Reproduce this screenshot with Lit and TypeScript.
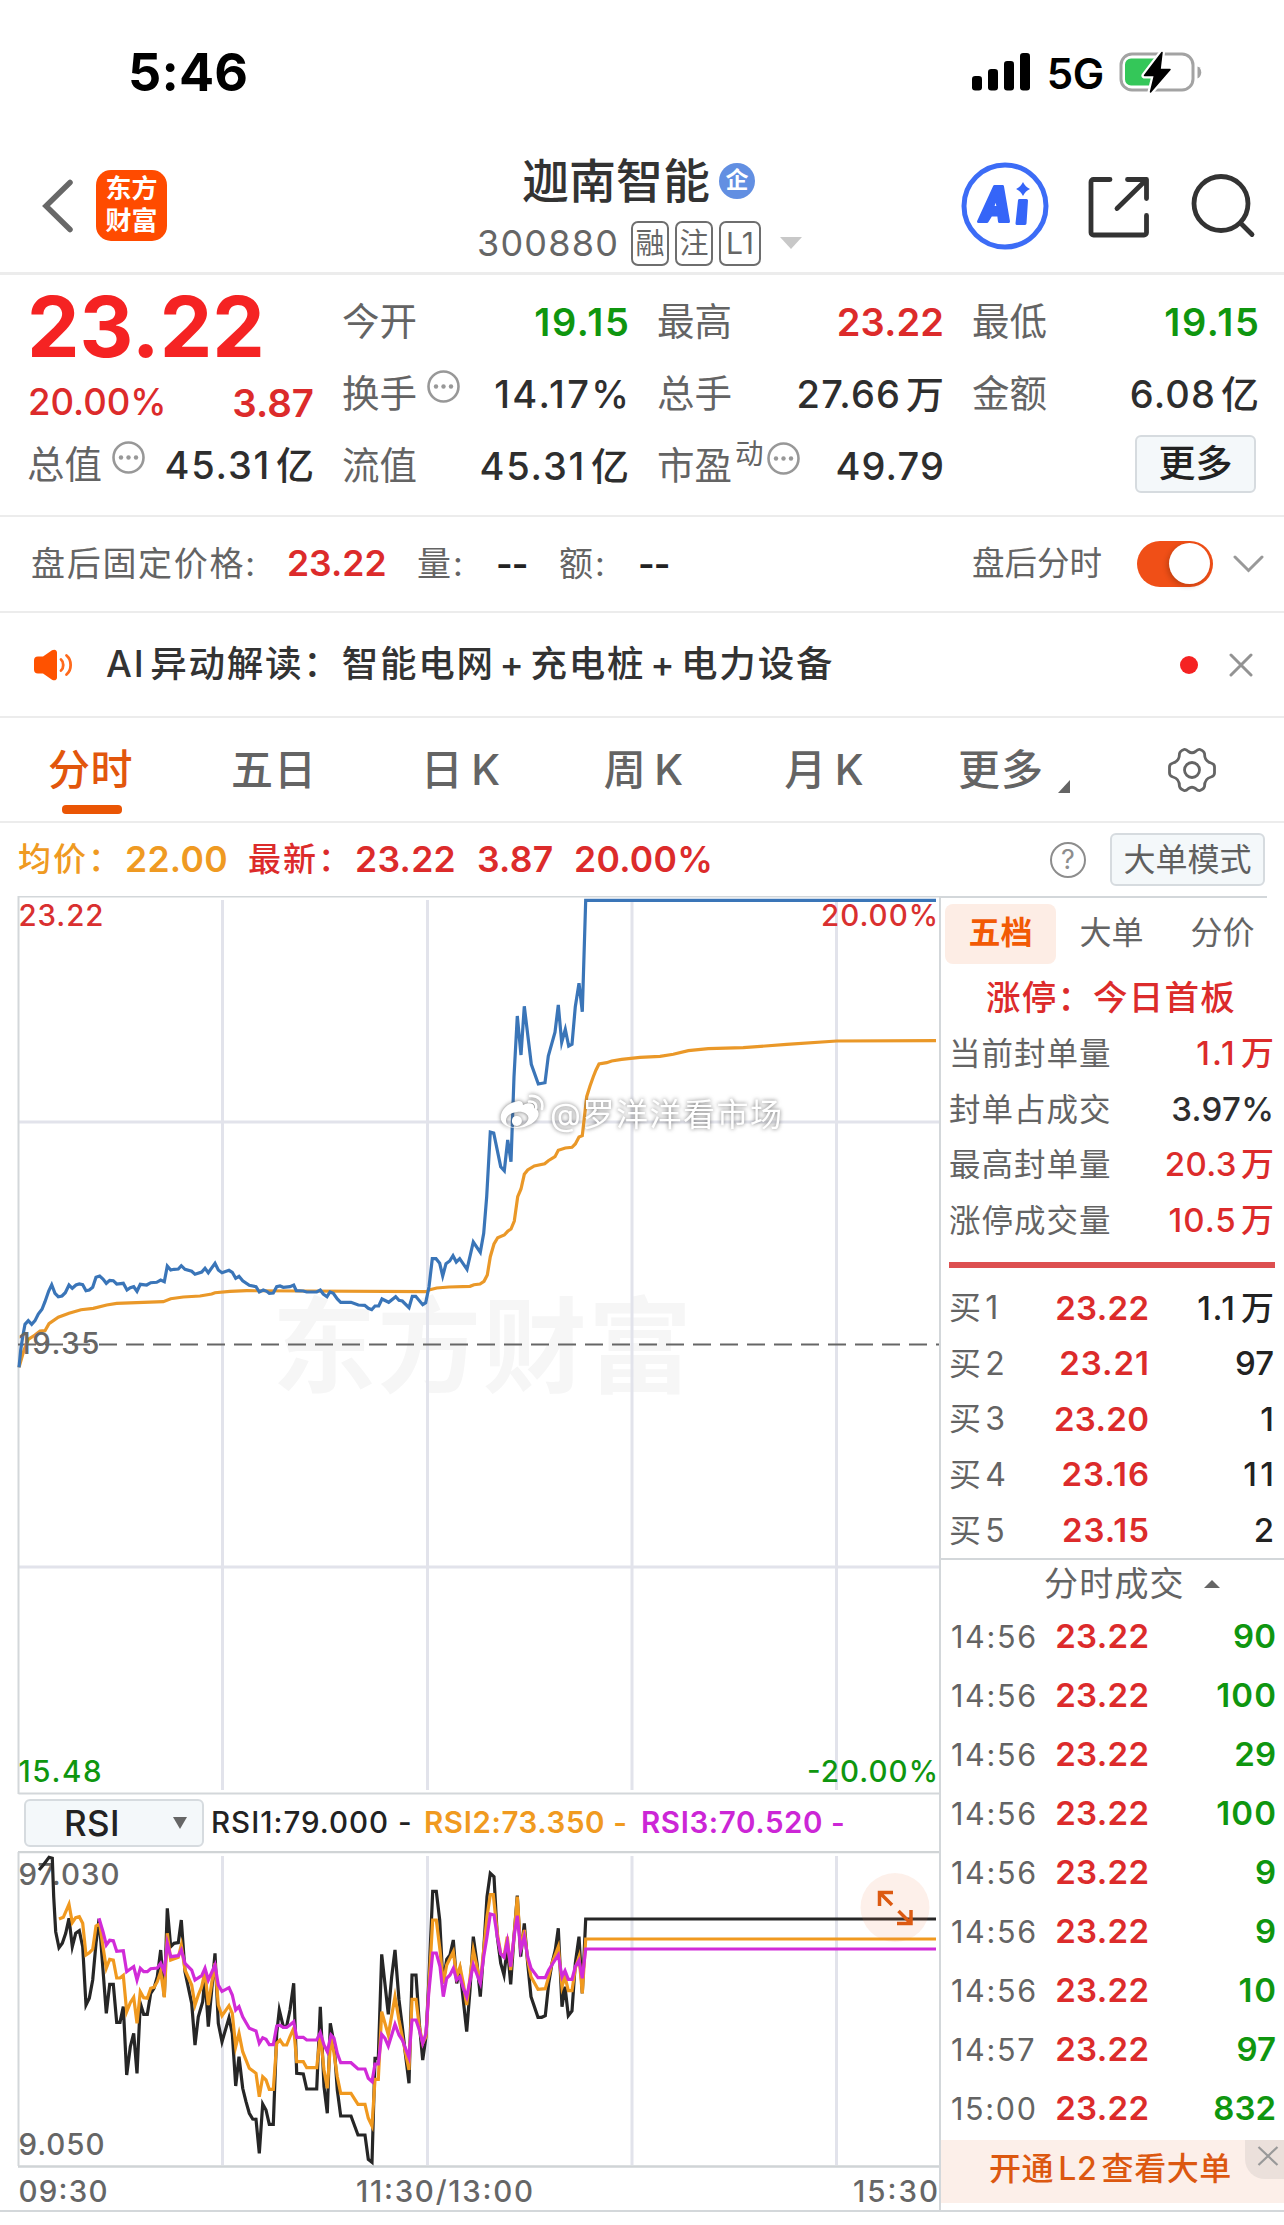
import { LitElement, html, svg, css } from "lit";
import { customElement } from "lit/decorators.js";
import { styleMap } from "lit/directives/style-map.js";

type Pt = [number, number];

/** Turns a flat "x,y;x,y" series at three units per pixel into points shifted by an offset. */
function series(raw: string, dx: number, dy: number): Pt[] {
  return raw.split(";").map((p) => {
    const [x, y] = p.split(",").map(Number);
    return [x / 3 + dx, y / 3 + dy] as Pt;
  });
}
const poly = (pts: Pt[]) => pts.map((p) => p[0].toFixed(1) + "," + p[1].toFixed(1)).join(" ");

/** Splits mixed text into Latin and Han runs, with a small gap between neighbouring runs. */
const mixed = (text: string) =>
  (text.match(/[\x21-\x7e]+|[^\x21-\x7e]+/g) ?? []).map((run, i) => (i ? html`<span class="run">${run}</span>` : html`<span>${run}</span>`));

/** Opens up the tracking of numbers that contain the narrow digit 1. */
const tracking = (text: string, extra = 0) => {
  const ones = (text.match(/1/g) ?? []).length;
  const em = (ones * 0.1) / text.length + extra;
  return styleMap({ letterSpacing: em.toFixed(3) + "em", marginRight: (-em).toFixed(3) + "em" });
};

const PRICE: Pt[] = [
  ...series("57,412;62,360;68,320;75,283;85,272;95,283;105,272;115,252;126,238;135,215;146,183;155,164;165,190;175,200;186,198;196,188;207,165;217,175;228,165;238,162;248,164;258,182;268,180;278,172;288,142;299,138;309,147;319,160;329,151;340,152;350,162;370,160;381,180;391,173;401,170;411,184;421,163;440,165;452,158;470,157;482,150;493,155;502,108;512,120;522,118;535,117;544,107;555,118;575,124;585,133;605,126;615,115;625,128;645,100;655,120;666,128;687,121;697,127;707,145;717,139;728,152;748,166;768,170;778,186;790,180;800,184;808,190;820,189;830,170;840,168;850,172;870,170;881,165;889,182;910,183;920,186;950,186;961,180;970,192;981,200;990,186;1000,190;1012,207;1022,217;1053,217;1075,225;1094,226;1105,235;1115,239;1125,228;1136,228;1146,207;1166,217;1187,200;1197,211;1207,213;1227,233;1237,199;1247,199;1268,224", 0, 1230),
  ...series("137,1238;147,1190;157,1106;168,1106;179,1120;188,1158;198,1121;209,1113;219,1097;229,1116;239,1106;261,1138;280,1056;301,1087;311,1030;320,920;331,726;341,729;362,830;373,842;383,750;393,815;402,560;412,378;423,495;433,349;454,523;475,582;495,578;505,498;525,427;535,345;545,457;556,418;566,468;576,463;586,350;597,280;607,365;617,31;1668,31", 380, 890),
];
const AVERAGE: Pt[] = [
  ...series("57,412;72,360;85,328;105,315;120,303;135,302;147,281;175,262;207,250;243,239;280,235;320,225;350,220;410,218;490,215;512,206;550,201;600,198;635,192;645,188;690,184;740,182;900,183;1280,185", 0, 1230),
  ...series("147,1200;170,1194;207,1191;270,1189;282,1184;300,1182;312,1174;322,1155;331,1100;342,1062;353,1043;373,1035;383,1024;393,1017;403,993;413,920;423,897;433,853;443,840;463,828;494,821;505,812;525,800;535,781;556,774;576,772;586,762;597,741;607,737;620,620;630,588;640,560;648,540;657,522;680,518;695,513;725,508;780,502;840,499;880,493;925,482;985,476;1090,473;1220,463;1370,453;1668,452", 380, 890),
];
const RSI1: Pt[] = [
  ...series("117,360;130,345;147,322;157,325;161,440;167,545;177,593;187,580;197,550;207,505;217,590;227,550;238,542;248,590;258,765;268,745;278,690;288,580;295,525;300,540;309,660;319,790;329,703;340,703;350,817;360,817;370,770;380,975;391,890;401,850;411,970;421,760;431,793;442,793;452,730;462,715;472,680;482,600;493,740;502,475;512,590;522,580;535,578;544,510;555,665;575,760;585,885;595,800;608,755;615,680;625,830;635,720;645,610;655,820;666,875;687,803;697,850;707,1008;717,920;728,1015;738,1055;748,1090;758,1107;768,1108;778,1210;788,1062;798,1080;808,1123;820,1123;830,850;838,780;850,830;860,828;870,780;881,700;890,970;910,972;920,1017;950,1017;961,770", 0, 1750),
  ...series("12,1010;22,1090;31,820;42,880;52,1020;62,1098;93,1098;114,1155;135,1155;145,1228;156,1237;165,925;175,925;185,613;205,793;215,680;225,600;237,750;247,830;256,910;267,1000;276,675;288,675;298,820;308,930;318,860;326,700;338,424;349,424;359,510;369,700;380,628;390,615;400,570;410,700;420,660;430,750;440,845;450,720;460,560;471,640;481,740;491,600;501,440;511,370;522,380;532,560;542,640;552,675;562,590;572,703;582,560;592,437;602,620;613,520;623,640;633,740;654,802;665,802;676,797;686,700;696,640;706,600;715,535;726,770;735,710;745,797;756,783;766,640;777,560;787,730;797,507;1848,507", 320, 1750),
];
const RSI2: Pt[] = [
  ...series("177,507;190,502;207,463;217,518;227,503;238,500;248,520;258,615;268,608;278,598;288,528;299,522;309,590;319,655;329,628;340,630;350,684;360,684;370,676;380,785;391,758;401,742;411,820;421,725;431,743;442,745;452,715;462,712;472,695;482,665;493,742;502,550;512,630;535,622;544,585;555,660;575,705;585,765;595,735;605,710;615,665;625,765;635,700;645,640;655,765;666,797;687,767;697,790;707,890;717,850;728,905;748,955;768,970;778,1040;788,980;798,990;808,1018;820,1018;830,880;840,870;850,885;860,885;870,860;881,835;890,935;910,935;920,953;950,953;961,855", 0, 1750),
  ...series("12,960;22,1015;33,860;42,910;52,980;62,1030;93,1030;114,1063;135,1063;145,1105;156,1128;165,988;175,988;185,785;205,855;225,740;237,810;247,860;267,960;276,748;288,748;298,830;308,880;318,860;326,720;338,510;349,510;360,600;370,700;380,645;400,605;410,680;420,650;430,700;440,765;460,600;471,650;481,700;491,600;501,500;511,434;520,434;532,550;542,610;552,620;562,560;572,660;582,560;592,440;602,600;613,540;623,630;633,680;654,718;676,716;686,680;696,640;715,590;726,710;735,680;745,722;756,722;766,655;777,620;787,730;797,567;1848,567", 320, 1750),
];
const RSI3: Pt[] = [
  ...series("297,505;309,545;319,585;329,571;340,572;350,604;370,602;380,665;391,657;401,650;411,690;421,655;431,665;442,665;452,656;472,654;482,640;493,665;502,580;512,620;535,617;544,600;555,640;575,660;585,690;605,677;615,655;625,690;645,645;655,705;666,724;687,713;697,735;707,780;717,770;728,800;748,835;768,843;778,880;788,863;798,868;808,884;820,884;830,828;840,826;850,832;860,832;870,825;881,815;890,862;910,862;920,870;950,870;961,848", 0, 1750),
  ...series("12,885;22,905;33,855;42,865;52,910;62,938;93,938;114,957;135,957;145,985;156,995;165,942;175,942;185,853;195,865;205,888;225,823;237,855;247,870;267,922;276,810;288,810;298,840;308,880;318,850;326,730;338,609;349,609;360,650;370,740;380,685;390,675;400,655;410,690;420,680;430,715;440,740;460,645;481,700;491,620;501,560;511,492;522,495;532,560;542,612;552,622;562,575;572,650;582,560;592,497;602,600;613,560;623,620;633,655;654,683;676,683;686,660;715,615;726,680;735,662;745,688;756,688;766,650;777,632;787,685;797,597;1848,597", 320, 1750),
];
const GRID_X = [222.5, 427.5, 632, 836.5];

const base = css`
  :host, * { box-sizing: border-box; }
  :host {
    font-family: Inter, "Noto Sans CJK SC", sans-serif;
    color: #333;
    white-space: nowrap;
  }
  svg { display: block; flex: none; }
  .run { margin-left: 0.13em; }
  .red { color: #dc2b2b; }
  .green { color: #0f960f; }
  .dark { color: #2e2e2e; }
`;

@customElement("status-bar")
export class StatusBar extends LitElement {
  static styles = [base, css`
    :host { display: flex; height: 144px; padding: 0 82px 0 128px; align-items: center; color: #000; line-height: 1; }
    .time { font-size: 52px; font-weight: 700; letter-spacing: 0.2px; flex: 1; padding-top: 1px; }
    .net { font-size: 42px; font-weight: 600; margin: 3px 15px 0 16px; letter-spacing: -0.3px; }
  `];
  render() {
    return html`
      <span class="time">5:46</span>
      <svg width="59" height="38" viewBox="0 0 59 38"><rect y="23" width="10" height="14.5" rx="3.2"/><rect x="16" y="16" width="10" height="21.5" rx="3.2"/><rect x="32" y="8" width="10" height="29.5" rx="3.2"/><rect x="48" y="0" width="10" height="37.5" rx="3.2"/></svg>
      <span class="net">5G</span>
      <svg width="83" height="42" viewBox="0 0 83 42">
        <rect x="2" y="3" width="72" height="36" rx="11" fill="none" stroke="#a3a3a3" stroke-width="3"/>
        <path d="M12 7.5H35V34.500H12a6 6 0 0 1-6-6V13.500a6 6 0 0 1 6-6z" fill="#34c759"/>
        <path d="M78.500 15.500c5 1.500 5 10 0 12z" fill="#a3a3a3"/>
        <path d="M43 1.500 25.500 24.500H35.500L31.500 41 51 18.500H41z" fill="#000" stroke="#fff" stroke-width="6" stroke-linejoin="round"/>
        <path d="M43 1.500 25.500 24.500H35.500L31.500 41 51 18.500H41z" fill="#000" stroke="#000" stroke-width="1.500" stroke-linejoin="round"/>
      </svg>`;
  }
}

@customElement("stock-header")
export class StockHeader extends LitElement {
  static styles = [base, css`
    :host { display: grid; grid-template-columns: 477px 1fr 322px; height: 131px; border-bottom: 3px solid #ececec; }
    .left { display: flex; align-items: center; padding: 0 0 5px 42px; gap: 23px; }
    .logo { width: 71px; height: 71px; border-radius: 15px; background: #ff4b00; color: #fff; font-size: 26px; font-weight: 700; line-height: 32px; text-align: center; padding-top: 3px; }
    .logo span { display: block; height: 32px; }
    .mid { display: flex; flex-direction: column; }
    .title { display: flex; align-items: center; margin: 13px 0 0 45px; font-size: 47px; line-height: 48px; font-weight: 500; gap: 9px; }
    .badge { width: 36px; height: 36px; border-radius: 50%; background: #628fe2; color: #fff; font-size: 23px; line-height: 34px; font-weight: 700; text-align: center; }
    .sub { display: flex; align-items: center; gap: 6px; height: 46px; margin-top: 15px; color: #666; }
    .code { font-size: 36px; letter-spacing: 1.200px; margin-right: 6px; line-height: 46px; }
    .tag { border: 2px solid #6e6e6e; border-radius: 7px; width: 38px; height: 45px; font-size: 29px; line-height: 41px; text-align: center; }
    .tag.wide { width: 42px; font-size: 30px; letter-spacing: 0.3px; }
    .tri { margin-left: 13px; }
    .right { display: flex; align-items: center; padding-bottom: 5px; margin-left: -1px; }
  `];
  render() {
    return html`
      <div class="left">
        <svg width="31" height="54" viewBox="0 0 31 54"><path d="M28 3.500 4 27l24 23.500" fill="none" stroke="#686868" stroke-width="5.500" stroke-linecap="round" stroke-linejoin="miter"/></svg>
        <div class="logo"><span>东方</span><span>财富</span></div>
      </div>
      <div class="mid">
        <div class="title">迦南智能<span class="badge">企</span></div>
        <div class="sub"><span class="code">300880</span><span class="tag">融</span><span class="tag">注</span><span class="tag wide">L1</span>
          <svg class="tri" width="22" height="12" viewBox="0 0 22 12"><path d="M0 0H22L11 12z" fill="#c8c8c8"/></svg></div>
      </div>
      <div class="right">
        <svg width="88" height="88" viewBox="0 0 88 88">
          <circle cx="44" cy="44" r="41" fill="#fff" stroke="#3c6cf6" stroke-width="5"/>
          <path d="M33.500 24.500H41.500L47.500 59.500H38.500L37.700 53H30L26 59.500H17.500zM35 35 31.500 45.500H37.200z" fill="#3565f8" fill-rule="evenodd" stroke="#3565f8" stroke-width="3" stroke-linejoin="round"/>
          <path d="M58.500 38.500H65.500L64 61.500H56z" fill="#3565f8" stroke="#3565f8" stroke-width="3" stroke-linejoin="round"/>
          <path d="M62 20Q64.300 25 69 27Q64.300 29 62 34Q59.700 29 55 27Q59.700 25 62 20z" fill="#3565f8"/>
        </svg>
        <svg width="190" height="66" viewBox="1049 172 190 66" style="overflow:visible"><g fill="none" stroke="#333" stroke-width="4.800" stroke-linecap="round" stroke-linejoin="round"><path d="M1110 178.500H1093.500a2.500 2.500 0 0 0-2.500 2.500V231.500a2.500 2.500 0 0 0 2.500 2.500H1144a2.500 2.500 0 0 0 2.500-2.500V214.500M1127.500 178.500H1146.500V197.500M1146 179 1117 207.500"/><circle cx="1221" cy="202.500" r="27"/><path d="M1240.500 222 1252 233.500"/></g></svg>
      </div>`;
  }
}

@customElement("more-dot")
export class MoreDot extends LitElement {
  static styles = css`:host { display: block; flex: none; } svg { display: block; }`;
  render() {
    return html`<svg width="33" height="33" viewBox="0 0 33 33"><circle cx="16.500" cy="16.500" r="15" fill="none" stroke="#989898" stroke-width="2.600"/><g fill="#989898"><circle cx="9" cy="16.500" r="2.200"/><circle cx="16.500" cy="16.500" r="2.200"/><circle cx="24" cy="16.500" r="2.200"/></g></svg>`;
  }
}

interface Stat { label: string; value: string; tone?: string; dot?: boolean; sup?: string; }

@customElement("quote-panel")
export class QuotePanel extends LitElement {
  static styles = [base, css`
    :host { display: grid; grid-template-columns: repeat(4, 287px); column-gap: 28px; height: 242px; padding: 11px 0 0 27px; border-bottom: 2px solid #ececec; line-height: 1; }
    .row { display: flex; align-items: center; height: 72px; }
    .label { font-size: 37.500px; color: #646464; }
    .value { margin-left: auto; font-size: 38px; font-weight: 500; }
    .value.red, .value.green { font-weight: 600; }
    more-dot { margin: 0 0 16px 10px; }
    .sup { font-size: 28.500px; color: #646464; margin: 0 3px 24px 3px; align-self: center; }
    .sup + more-dot { margin-left: 0; }
    .big { height: 81px; display: flex; align-items: center; font-size: 83.500px; font-weight: 700; color: #f52323; }
    .change { height: 71px; display: flex; align-items: center; justify-content: space-between; padding-left: 1px; }
    .pct { font-size: 36.500px; font-weight: 500; color: #dc2b2b; }
    .diff { font-size: 38.500px; font-weight: 600; padding-top: 2px; color: #dc2b2b; }
    .row.first { height: 58px; margin-top: -2px; }
    .btn { margin: 0 3px 4px auto; width: 121px; height: 58px; border: 2px solid #d6dbdf; border-radius: 6px; background: #f4f8fa; font-size: 37px; font-weight: 500; line-height: 53px; text-align: center; color: #222; }
  `];
  private cell(s: Stat, cls = "") {
    const extra = s.tone ? 0.005 : 0.03;
    return html`<div class="row ${cls}"><span class="label">${s.label}</span>${s.sup ? html`<span class="sup">${s.sup}</span>` : ""}${s.dot ? html`<more-dot></more-dot>` : ""}<span class="value ${s.tone ?? "dark"}" style=${tracking(s.value, extra)}>${mixed(s.value)}</span></div>`;
  }
  render() {
    return html`
      <div>
        <div class="big">23.22</div>
        <div class="change"><span class="pct">20.00%</span><span class="diff">3.87</span></div>
        ${this.cell({ label: "总值", value: "45.31亿", dot: true }, "first")}
      </div>
      <div>
        ${this.cell({ label: "今开", value: "19.15", tone: "green" })}
        ${this.cell({ label: "换手", value: "14.17%", dot: true })}
        ${this.cell({ label: "流值", value: "45.31亿" })}
      </div>
      <div>
        ${this.cell({ label: "最高", value: "23.22", tone: "red" })}
        ${this.cell({ label: "总手", value: "27.66万" })}
        ${this.cell({ label: "市盈", value: "49.79", sup: "动", dot: true })}
      </div>
      <div>
        ${this.cell({ label: "最低", value: "19.15", tone: "green" })}
        ${this.cell({ label: "金额", value: "6.08亿" })}
        <div class="row"><span class="btn">更多</span></div>
      </div>`;
  }
}

@customElement("after-hours")
export class AfterHours extends LitElement {
  static styles = [base, css`
    :host { display: flex; align-items: center; height: 96px; padding: 0 20px 0 31px; border-bottom: 2px solid #ececec; color: #646464; font-size: 34px; line-height: 1; }
    .name { width: 256px; letter-spacing: 1.700px; }
    .num { width: 130px; font-size: 35.500px; font-weight: 600; }
    .k { width: 79px; letter-spacing: 2px; }
    .v { width: 63px; color: #222; font-weight: 600; font-size: 36px; letter-spacing: -1px; }
    .sw-label { margin-left: auto; font-size: 32.500px; }
    .switch { width: 76px; height: 46px; border-radius: 23px; background: #f04f17; margin: 0 20px 0 35px; padding: 2px 3px; display: flex; justify-content: flex-end; }
    .knob { width: 41px; height: 41px; border-radius: 50%; background: #fff; box-shadow: -2px 2px 5px rgba(90, 30, 0, 0.3); }
  `];
  render() {
    return html`
      <span class="name">盘后固定价格:</span><span class="num red">23.22</span>
      <span class="k">量:</span><span class="v">--</span><span class="k">额:</span><span class="v">--</span>
      <span class="sw-label">盘后分时</span><span class="switch"><span class="knob"></span></span>
      <svg width="31" height="18" viewBox="0 0 31 18"><path d="M2 2 15.500 15.500 29 2" fill="none" stroke="#999" stroke-width="3" stroke-linecap="round"/></svg>`;
  }
}

@customElement("ai-notice")
export class AiNotice extends LitElement {
  static styles = [base, css`
    :host { display: flex; align-items: center; height: 105px; padding: 0 31px 0 33px; border-bottom: 2px solid #ececec; font-size: 36.500px; line-height: 1; }
    .txt { font-weight: 500; margin: 0 auto 0 33px; letter-spacing: 1.800px; }
    .txt .run { margin-left: 0.13em; }
    .dot { width: 18px; height: 18px; border-radius: 50%; background: #f52222; margin-right: 31px; }
  `];
  render() {
    return html`
      <svg width="40" height="34" viewBox="0 0 40 34"><path d="M1 12.500a4 4 0 0 1 4-4H10L19 2.300C21.500.8 24 2 24 4.500V29.500C24 32 21.500 33.200 19 31.700L10 25.500H5a4 4 0 0 1-4-4z" fill="#ff5200"/><g fill="none" stroke="#ff6a1c" stroke-width="2.800" stroke-linecap="round"><path d="M28 11.500c3 2.500 3 8.500 0 11M33.500 7.500c5.500 4.500 5.500 14.500 0 19"/></g></svg>
      <span class="txt">${mixed("AI异动解读：智能电网+充电桩+电力设备")}</span>
      <span class="dot"></span>
      <svg width="24" height="24" viewBox="0 0 24 24"><path d="M2 2 22 22M22 2 2 22" stroke="#939393" stroke-width="3" stroke-linecap="round"/></svg>`;
  }
}

@customElement("period-tabs")
export class PeriodTabs extends LitElement {
  static styles = [base, css`
    :host { display: grid; grid-template-columns: 183px 182px 192px 174px 187px 192px 1fr; height: 105px; border-bottom: 2px solid #ececec; font-size: 42px; line-height: 104px; font-weight: 500; color: #646464; }
    .tab { display: flex; justify-content: center; letter-spacing: 1px; }
    .tab .run { margin-left: 0.18em; }
    .active { flex-direction: column; justify-content: flex-start; align-items: center; color: #e2560c; }
    .active span { letter-spacing: 0.5px; margin-left: -2px; }
    .active i { width: 60px; height: 9px; border-radius: 4px; background: #ea5504; margin-top: -17px; }
    .tri { align-self: flex-end; margin: 0 0 29px 14px; }
    .gear { align-self: center; margin-left: 57px; }
  `];
  render() {
    return html`
      <div class="tab active"><span>分时</span><i></i></div>
      <div class="tab">五日</div><div class="tab">${mixed("日K")}</div><div class="tab">${mixed("周K")}</div><div class="tab">${mixed("月K")}</div>
      <div class="tab">更多<svg class="tri" width="12" height="13" viewBox="0 0 12 13"><path d="M12 0V13H0z" fill="#646464"/></svg></div>
      <svg class="gear" width="50" height="50" viewBox="0 0 50 50"><g fill="none" stroke="#646464" stroke-width="2.800" stroke-linejoin="round"><path d="M17 4.500C18.500 4 20 5 21.500 6.500Q25 9 28.500 6.500C30 5 31.500 4 33 4.500Q37 6 37.500 8.500C37.500 14 40 17 44 18Q47.500 19 47.500 22V28Q47.500 31 44 32C40 33 37.500 36 37.500 41.500Q37 44 33 45.500C31.500 46 30 45 28.500 43.500Q25 41 21.500 43.500C20 45 18.500 46 17 45.500Q13 44 12.500 41.500C12.500 36 10 33 6 32Q2.500 31 2.500 28V22Q2.500 19 6 18C10 17 12.500 14 12.500 8.500Q13 6 17 4.500z"/><circle cx="25" cy="25" r="7.500"/></g></svg>`;
  }
}

@customElement("price-legend")
export class PriceLegend extends LitElement {
  static styles = [base, css`
    :host { display: flex; align-items: center; height: 73px; padding: 0 19px 0 18px; font-size: 35.500px; font-weight: 600; line-height: 1; }
    span { letter-spacing: 0.3px; }
    .k { font-size: 33px; font-weight: 500; letter-spacing: 2px; }
    .avg { color: #ef9a22; }
    .k.avg { width: 107px; } .n.avg { width: 123px; }
    .k.red { width: 107px; } .a { width: 122px; } .b { width: 97px; }
    .q { width: 36px; height: 36px; border: 2.500px solid #8d8d8d; border-radius: 50%; color: #8d8d8d; font-size: 27px; font-weight: 400; line-height: 31px; text-align: center; margin: 0 24px 0 auto; letter-spacing: 0; }
    .btn { width: 155px; height: 53px; border: 2px solid #d6dbdf; border-radius: 6px; background: #f4f8fa; color: #5f5f5f; font-size: 32px; font-weight: 400; line-height: 49px; text-align: center; letter-spacing: 0; }
  `];
  render() {
    return html`<span class="k avg">均价：</span><span class="n avg">22.00</span><span class="k red">最新：</span><span class="a red">23.22</span><span class="b red">3.87</span><span class="red">20.00%</span><span class="q">?</span><span class="btn">大单模式</span>`;
  }
}

@customElement("trend-charts")
export class TrendCharts extends LitElement {
  static styles = [base, css`
    :host { display: block; width: 940px; flex: none; }
    text { font-family: Inter, "Noto Sans CJK SC", sans-serif; font-weight: 500; font-size: 29.500px; }
    .grid { stroke: #e2e3eb; stroke-width: 3; }
    .frame { stroke: #d3d7da; stroke-width: 2; fill: none; }
    .thick { stroke: #d0d4d6; stroke-width: 2.500; fill: none; }
    .line { fill: none; stroke-width: 3.200; stroke-linejoin: miter; stroke-miterlimit: 6; }
    .wm { font-weight: 700; font-size: 104px; fill: #f6f6f6; }
    .bar { display: flex; align-items: center; height: 56px; padding-left: 24px; font-size: 29.500px; font-weight: 600; line-height: 1; letter-spacing: 0.6px; }
    .sel { width: 180px; height: 48px; border: 2px solid #d6dbdf; border-radius: 6px; background: #f4f8fa; display: flex; align-items: center; padding: 0 15px 0 38px; justify-content: space-between; font-size: 35px; letter-spacing: 0.4px; color: #222; margin-right: 7px; font-weight: 500; }
    .r1 { width: 213px; color: #222; font-weight: 500; letter-spacing: 1px; } .r2 { width: 217px; color: #f09a20; } .r3 { color: #cc26d6; }
    .weibo { filter: drop-shadow(0 0 2px rgba(70, 70, 70, 0.75)); }
    .author { font-weight: 400; font-size: 32px; }
  `];
  render() {
    const main = svg`
      <text class="wm" x="272" y="1385" textLength="420">东方财富</text>
      ${GRID_X.map((x) => svg`<path class="grid" d="M${x} 900V1790"/>`)}
      <path class="grid" d="M19 1122H939M19 1567H939"/>
      <path class="frame" d="M18.500 1794V896.500H940M18.500 1793.500H940"/>
      <path d="M18 1344.500H939" stroke="#666" stroke-width="1.800" stroke-dasharray="18 9"/>
      <polyline class="line" stroke="#ea9828" points=${poly(AVERAGE)}/>
      <polyline class="line" stroke="#3a75b8" points=${poly(PRICE)}/>
      <text x="18.500" y="925.500" fill="#d93030" textLength="85">23.22</text>
      <text x="821" y="925.500" fill="#d93030" textLength="117">20.00%</text>
      <text x="18.500" y="1354" fill="#666" textLength="81">19.35</text>
      <text x="18.500" y="1781.500" fill="#0f960f" textLength="83">15.48</text>
      <text x="807" y="1781.500" fill="#0f960f" textLength="131">-20.00%</text>
      <g class="weibo" fill="#fff">
        <path fill-rule="evenodd" d="M515 1102c4-2 8-1 8 3 6-3 12-2 11 3 6 2 6 8 1 13-8 8-26 10-33 1-5-8 5-19 13-20zm2 10c-9 1-13 7-10 12 5 6 18 3 21-4 2-5-4-9-11-8zm-1 4a5 5 0 1 1-.1 9.800a5 5 0 0 1 .1-9.800z"/>
        <path d="M530 1096c8-1 14 5 12 13M529 1101.500c5-.5 8 2.500 7 7" fill="none" stroke="#fff" stroke-width="2.600" stroke-linecap="round"/>
        <text class="author" x="550" y="1126" textLength="232">@罗洋洋看市场</text>
      </g>`;
    const rsi = svg`
      ${GRID_X.map((x) => svg`<path class="grid" d="M${x} 1856V2165"/>`)}
      <path class="thick" d="M18 1852H940M18 2166.500H940"/><path class="frame" d="M18.500 1852V2166"/>
      <text x="18.500" y="1885" fill="#666" textLength="101">97.030</text>
      <text x="18.500" y="2155" fill="#666" textLength="86">9.050</text>
      <polyline class="line" stroke="#262626" points=${poly(RSI1)}/>
      <polyline class="line" stroke="#f0991f" points=${poly(RSI2)}/>
      <polyline class="line" stroke="#d12bd8" points=${poly(RSI3)}/>
      <circle cx="895" cy="1907.500" r="34.500" fill="rgba(240,130,80,.12)"/>
      <g fill="none" stroke="#dc5a12" stroke-width="3.500"><path d="M879.500 1906V1892.500H893M880 1893 892 1905M911 1910V1923.500H897M910.500 1923 898.500 1911"/></g>
      <text x="18.500" y="2202" fill="#666" textLength="89">09:30</text>
      <text x="356" y="2202" fill="#666" textLength="177">11:30/13:00</text>
      <text x="853" y="2202" fill="#666" textLength="85">15:30</text>`;
    return html`
      <svg width="940" height="899" viewBox="0 896 940 899">${main}</svg>
      <div class="bar"><span class="sel">RSI<svg width="14" height="12" viewBox="0 0 14 12"><path d="M0 0H14L7 12z" fill="#666"/></svg></span><span class="r1">RSI1:79.000 -</span><span class="r2">RSI2:73.350 -</span><span class="r3">RSI3:70.520 -</span></div>
      <svg width="940" height="358" viewBox="0 1851 940 358">${rsi}</svg>`;
  }
}

@customElement("order-book")
export class OrderBook extends LitElement {
  static styles = [base, css`
    :host { display: flex; flex-direction: column; width: 345px; border-left: 2px solid #d3d7da; margin-left: -1px; font-weight: 500; line-height: 1; color: #646464; }
    .tabs { display: flex; width: 326px; height: 66px; padding: 6px 0 0 4px; border-top: 2px solid #d3d7da; font-size: 32px; font-weight: 400; line-height: 57px; }
    .tabs span { flex: none; width: 111px; text-align: center; }
    .tabs .on { background: #fdede5; color: #f25a05; font-weight: 700; border-radius: 8px; height: 60px; }
    .headline { font-size: 34.500px; letter-spacing: 1.200px; padding: 19px 0 0 45px; height: 64px; }
    .row { display: flex; justify-content: space-between; align-items: center; height: 55.600px; padding: 0 10px 0 8px; font-size: 31.500px; letter-spacing: 1px; font-weight: 400; }
    .row b { font-size: 33px; font-weight: 500; }
    .bar { height: 6px; background: #dd4f50; margin: 14px 9px 12px 8px; flex: none; }
    .bid { display: grid; grid-template-columns: 100px 100px 1fr; align-items: center; height: 55.600px; padding: 0 10px 0 8px; font-size: 32px; font-weight: 400; }
    .bid b, .trade b { text-align: right; font-size: 33px; font-weight: 600; }
    .bid .dark { color: #222; font-weight: 500; }
    .title { border-top: 2px solid #d3d7da; height: 49px; padding-left: 103px; display: flex; align-items: center; font-size: 34px; letter-spacing: 1.200px; font-weight: 400; }
    .title svg { margin-left: 19px; }
    .trade { display: grid; grid-template-columns: 92px 106px 1fr; align-items: center; height: 59px; padding: 0 8px 0 10px; font-size: 30.500px; font-weight: 400; }
    .promo { display: flex; height: 63px; margin-top: 2px; background: #fcefe9; color: #dc5810; font-size: 32px; letter-spacing: 0.6px; font-weight: 500; align-items: center; justify-content: space-between; padding-left: 48px; }
    .promo .label { padding-bottom: 6px; }
    .x { align-self: flex-start; width: 39px; height: 39px; border-radius: 0 0 0 20px; background: #ebe0db; padding: 6px 0 0 12px; }
  `];
  private facts = [["当前封单量", "1.1万", "red"], ["封单占成交", "3.97%", "dark"], ["最高封单量", "20.3万", "red"], ["涨停成交量", "10.5万", "red"]];
  private bids = [["买1", "23.22", "1.1万"], ["买2", "23.21", "97"], ["买3", "23.20", "1"], ["买4", "23.16", "11"], ["买5", "23.15", "2"]];
  private trades = [["14:56", "90"], ["14:56", "100"], ["14:56", "29"], ["14:56", "100"], ["14:56", "9"], ["14:56", "9"], ["14:56", "10"], ["14:57", "97"], ["15:00", "832"]];
  render() {
    return html`
      <div class="tabs"><span class="on">五档</span><span>大单</span><span>分价</span></div>
      <div class="headline red">涨停：今日首板</div>
      ${this.facts.map(([k, v, c]) => html`<div class="row"><span>${k}</span><b class=${c} style=${tracking(v, 0.01)}>${mixed(v)}</b></div>`)}
      <div class="bar"></div>
      ${this.bids.map(([k, p, v]) => html`<div class="bid"><span>${mixed(k)}</span><b class="red" style=${tracking(p, 0.01)}>${p}</b><b class="dark" style=${tracking(v, 0)}>${mixed(v)}</b></div>`)}
      <div class="title">分时成交<svg width="16" height="8" viewBox="0 0 16 8"><path d="M8 0 16 8H0z" fill="#666"/></svg></div>
      ${this.trades.map(([t, v]) => html`<div class="trade"><span style=${tracking(t, 0.035)}>${t}</span><b class="red" style=${tracking("23.22", 0.01)}>23.22</b><b class="green" style=${tracking(v, 0)}>${v}</b></div>`)}
      <div class="promo"><span class="label">${mixed("开通L2查看大单")}</span><span class="x"><svg width="22" height="20" viewBox="0 0 22 20"><path d="M1.500 1 20.500 19M20.500 1 1.500 19" stroke="#999" stroke-width="2.200"/></svg></span></div>`;
  }
}

@customElement("app-root")
export class AppRoot extends LitElement {
  static styles = css`
    :host { display: block; width: 1284px; height: 2225px; background: #fff; overflow: hidden; }
    .body { display: flex; height: 1314px; border-bottom: 2px solid #d3d7da; }
  `;
  render() {
    return html`
      <status-bar></status-bar>
      <stock-header></stock-header>
      <quote-panel></quote-panel>
      <after-hours></after-hours>
      <ai-notice></ai-notice>
      <period-tabs></period-tabs>
      <price-legend></price-legend>
      <div class="body"><trend-charts></trend-charts><order-book></order-book></div>`;
  }
}
